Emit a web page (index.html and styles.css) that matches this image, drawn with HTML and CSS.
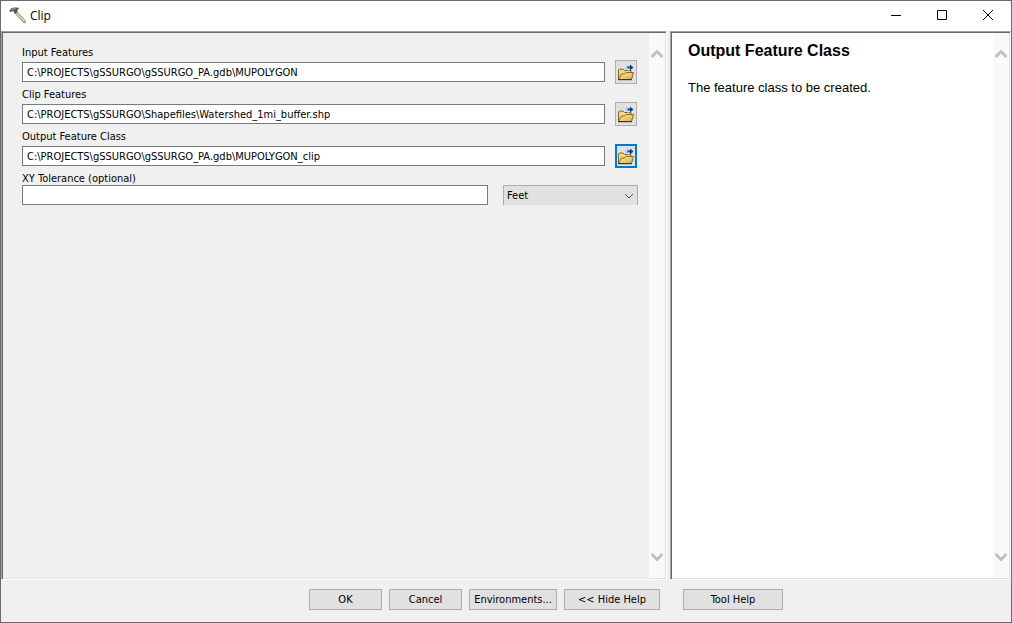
FILE: index.html
```html
<!DOCTYPE html>
<html lang="en">
<head>
<meta charset="utf-8">
<title>Clip</title>
<link rel="stylesheet" href="styles.css">
</head>
<body>
<svg class="defs" aria-hidden="true">
  <defs>
    <linearGradient id="gold" x1="0" y1="0" x2="1" y2="1">
      <stop offset="0" stop-color="#fff0a8"/><stop offset="1" stop-color="#d6ab3a"/>
    </linearGradient>
    <symbol id="folder" viewBox="0 0 18 18">
      <path d="M1.500 16.500V7l1-1h3.500l1.500 1.500h6.500v9z" fill="#f0d684" stroke="#80692c"/>
      <path d="M1.500 16.500l3-5.500h3l1.500-1.500h7.500l-2 7z" fill="url(#gold)" stroke="#80692c"/>
      <path d="M1 16.700h14" stroke="#3a2d10"/>
      <path d="M9 6.500c-.5-2.500.5-3.500 2.500-3.500" fill="none" stroke="#b4d0e8" stroke-width="2"/>
      <path d="M10.500 3.500H13V1.500l3.500 3-3.500 3V5.500h-2.500z" fill="#07458a"/>
      <path d="M10.500 7l1.500 1" stroke="#9fc4e4"/>
    </symbol>
    <symbol id="scroll-up" viewBox="0 0 12 10"><path d="M0.500 8L6 2.500 11.500 8" fill="none" stroke="#bfbfbf" stroke-width="3"/></symbol>
    <symbol id="scroll-down" viewBox="0 0 12 10"><path d="M0.500 2L6 7.500 11.500 2" fill="none" stroke="#bfbfbf" stroke-width="3"/></symbol>
  </defs>
</svg>
<div class="window">
  <header class="titlebar">
    <svg class="hammer" viewBox="0 0 18 18" aria-hidden="true">
      <path d="M7.500 6l7.800 8.500" stroke="#8b8075" stroke-width="3.200" stroke-linecap="round"/>
      <path d="M7.500 6l7.600 8.200" stroke="#ddd2c2" stroke-width="1.700" stroke-linecap="round"/>
      <path d="M0.500 3.500L2 1.500 5 0.500h3.500l1.500 1-1.500 1.500v2L6 7 4.500 4.500 3 4 1 5.500z" fill="#56595c"/>
      <path d="M2.500 2.500l4-1" stroke="#a5a9ad"/>
    </svg>
    <h1 class="title">Clip</h1>
    <button class="caption-button" type="button" aria-label="Minimize"><svg viewBox="0 0 12 12"><path d="M1 6.500h10"/></svg></button>
    <button class="caption-button" type="button" aria-label="Maximize"><svg viewBox="0 0 12 12"><path d="M1.500 1.500h9v9h-9z"/></svg></button>
    <button class="caption-button" type="button" aria-label="Close"><svg viewBox="0 0 12 12"><path d="M1 1l10 10M11 1L1 11"/></svg></button>
  </header>
  <main class="panes">
    <section class="pane pane-form">
      <form class="fields" id="clip-form">
        <div class="field">
          <label for="input-features">Input Features</label>
          <div class="control browse">
            <input class="text" id="input-features" type="text" value="C:\PROJECTS\gSSURGO\gSSURGO_PA.gdb\MUPOLYGON">
            <button class="browse-button" type="button" aria-label="Browse input features"><svg><use href="#folder"/></svg></button>
          </div>
        </div>
        <div class="field">
          <label for="clip-features">Clip Features</label>
          <div class="control browse">
            <input class="text" id="clip-features" type="text" value="C:\PROJECTS\gSSURGO\Shapefiles\Watershed_1mi_buffer.shp">
            <button class="browse-button" type="button" aria-label="Browse clip features"><svg><use href="#folder"/></svg></button>
          </div>
        </div>
        <div class="field">
          <label for="output-class">Output Feature Class</label>
          <div class="control browse">
            <input class="text" id="output-class" type="text" value="C:\PROJECTS\gSSURGO\gSSURGO_PA.gdb\MUPOLYGON_clip">
            <button class="browse-button active" type="button" aria-label="Browse output feature class"><svg><use href="#folder"/></svg></button>
          </div>
        </div>
        <div class="field">
          <label for="tolerance">XY Tolerance (optional)</label>
          <div class="control tolerance">
            <input class="text" id="tolerance" type="text">
            <div class="unit">
              <select aria-label="Tolerance unit"><option>Feet</option></select>
              <svg viewBox="0 0 10 6" aria-hidden="true"><path d="M1 1l4 4 4-4"/></svg>
            </div>
          </div>
        </div>
      </form>
      <div class="scrollbar" aria-hidden="true"><svg><use href="#scroll-up"/></svg><svg><use href="#scroll-down"/></svg></div>
    </section>
    <section class="pane pane-help">
      <article class="help">
        <h2>Output Feature Class</h2>
        <p>The feature class to be created.</p>
      </article>
      <div class="scrollbar" aria-hidden="true"><svg><use href="#scroll-up"/></svg><svg><use href="#scroll-down"/></svg></div>
    </section>
  </main>
  <footer class="actions">
    <button class="action" type="submit" form="clip-form">OK</button>
    <button class="action" type="button">Cancel</button>
    <button class="action environments" type="button">Environments...</button>
    <button class="action hide-help" type="button">&lt;&lt; Hide Help</button>
    <button class="action tool-help" type="button">Tool Help</button>
  </footer>
</div>
</body>
</html>
```
FILE: styles.css
```css
* { box-sizing: border-box; }

body {
  margin: 0;
  color: #000;
  background: #f0f0f0;
  font: 11px/13px "DejaVu Sans Condensed", Tahoma, sans-serif;
}

button, input, select { margin: 0; color: inherit; font: inherit; border-radius: 0; }
.defs { position: absolute; width: 0; height: 0; }

.window {
  display: flex;
  flex-direction: column;
  min-height: 100vh;
  border: 1px solid #6b6b6b;
}

.titlebar {
  display: flex;
  align-items: center;
  height: 30px;
  padding-left: 8px;
  background: #fff;
}
.hammer { width: 18px; height: 18px; margin-right: 3px; fill: none; }
.title { flex: 1; margin: 0; font: 12px/16px "Open Sans", "Segoe UI", sans-serif; }
.caption-button {
  display: flex;
  align-items: center;
  justify-content: center;
  width: 46px;
  height: 30px;
  padding: 0 0 2px;
  border: 0;
  background: transparent;
}
.caption-button svg { width: 12px; height: 12px; fill: none; stroke: #000; }

.panes {
  flex: 1;
  display: grid;
  grid-template-columns: 666fr 341fr;
  gap: 3px;
}
.pane {
  display: flex;
  border: 1px solid;
  border-color: #a0a0a0 #fff #fff #a0a0a0;
  box-shadow: inset 1px 1px #696969, inset -1px -1px #e3e3e3;
}
.pane-help { background: #fff; }
.fields {
  flex: 1;
  display: flex;
  flex-direction: column;
  gap: 4px;
  padding: 14px 10px 14px 20px;
}
.field label { display: block; }
.control { display: flex; align-items: center; }
.browse { height: 24px; gap: 10px; margin-top: 1px; padding-right: 1px; }
.tolerance { gap: 15px; }
.text {
  flex: 1;
  min-width: 0;
  height: 20px;
  padding: 0 4px;
  border: 1px solid #7a7a7a;
  background: #fff;
}
.browse-button {
  display: flex;
  align-items: center;
  justify-content: center;
  width: 22px;
  height: 24px;
  padding: 0;
  border: 1px solid #adadad;
  background: #e1e1e1;
}
.browse-button.active { border: 2px solid #0078d7; }
.browse-button svg { flex: none; width: 18px; height: 18px; }

.unit { position: relative; width: 135px; height: 20px; }
.unit select {
  width: 100%;
  height: 20px;
  padding: 0 3px;
  border: 1px solid #adadad;
  border-bottom: 0;
  background: #e1e1e1;
  appearance: none;
}
.unit svg {
  position: absolute;
  top: 8px;
  right: 4px;
  width: 10px;
  height: 6px;
  fill: none;
  stroke: #505050;
  pointer-events: none;
}

.scrollbar {
  display: flex;
  flex-direction: column;
  justify-content: space-between;
  align-items: center;
  width: 16px;
  margin: 1px;
  padding: 16px 0;
  background: #f9f9f9;
}
.scrollbar svg { width: 12px; height: 10px; }

.help { flex: 1; padding: 10px 17px; font: 13px/16px "Liberation Sans", Arial, sans-serif; }
.help h2 { margin: 0 0 20px; font-size: 16px; line-height: 18px; }
.help p { margin: 0; }

.actions {
  display: flex;
  justify-content: center;
  gap: 7px;
  padding: 9px 0 12px 80px;
}
.action {
  width: 73px;
  height: 21px;
  padding: 0;
  border: 1px solid #adadad;
  background: #e1e1e1;
  white-space: nowrap;
}
.environments { width: 88px; }
.hide-help { width: 96px; }
.tool-help { width: 100px; margin-left: 16px; }
```
